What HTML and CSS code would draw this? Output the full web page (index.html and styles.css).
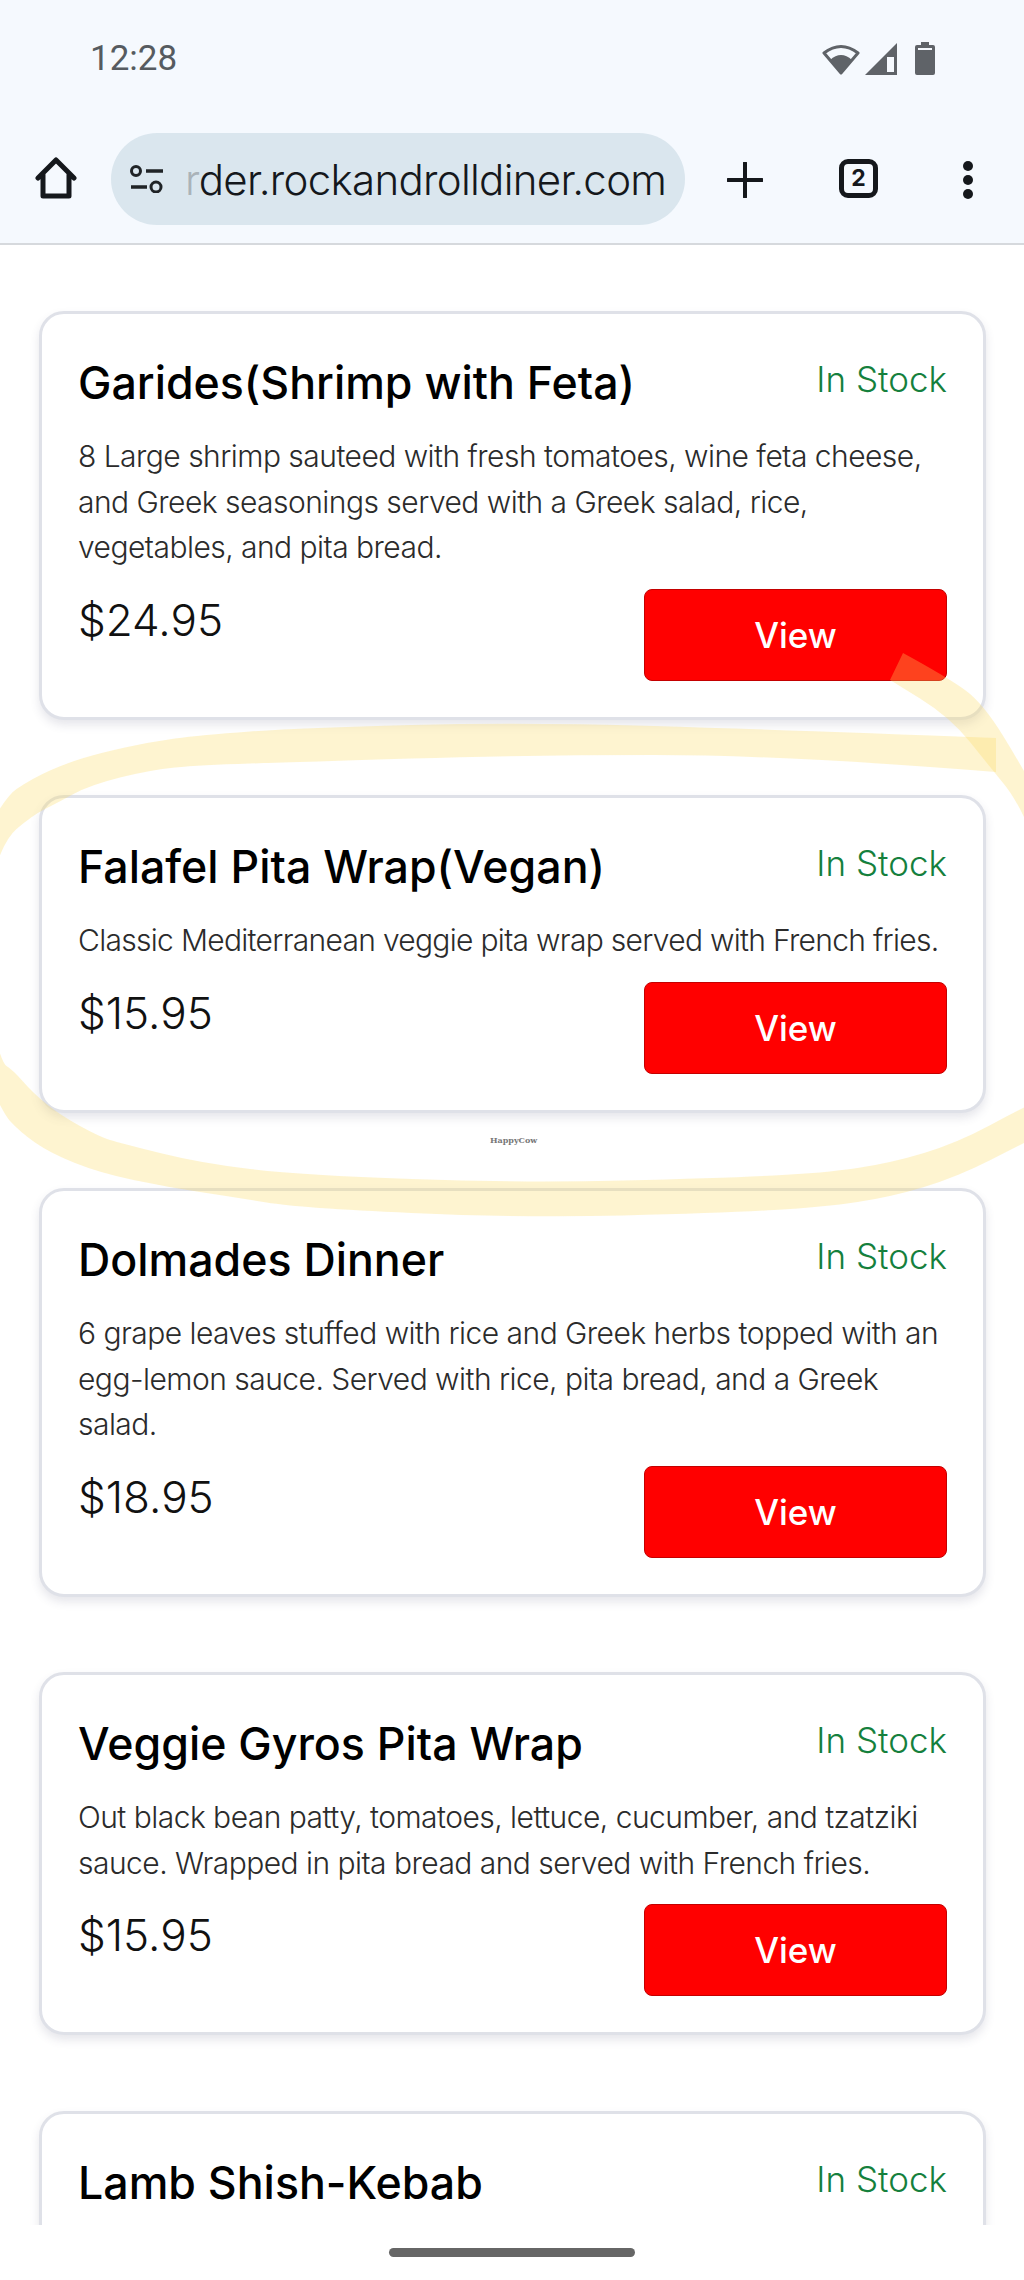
FILE: index.html
```html
<!DOCTYPE html>
<html lang="en">
<head>
  <meta charset="UTF-8">
  <meta name="viewport" content="width=device-width, initial-scale=1.0">
  <title>Rock and Roll Diner - Order</title>
  <link rel="stylesheet" href="styles.css">
</head>
<body>
  <div class="phone">
    <!-- Status bar -->
    <div class="status-bar">
      <span class="clock">12:28</span>
      <div class="status-icons">
        <svg class="wifi" width="38" height="32" viewBox="0 0 38 32">
          <path d="M19 30 2 10Q19 -3 36 10Z" fill="none" stroke="#5f6368" stroke-width="3" stroke-linejoin="round"/>
          <path d="M19 31 8 17Q19 7 30 17Z" fill="#5f6368"/>
        </svg>
        <svg class="signal" width="32" height="32" viewBox="0 0 32 32">
          <path d="M0 32 32 0V32Z" fill="#5f6368"/>
          <path d="M22 14 H29 V29 H22Z" fill="#f5f9fe"/>
        </svg>
        <svg class="battery" width="20" height="33" viewBox="0 0 20 33">
          <path d="M6 0H14V3H18Q20 3 20 5V31Q20 33 18 33H2Q0 33 0 31V5Q0 3 2 3H6Z" fill="#5f6368"/>
          <rect x="3" y="6" width="14" height="2" fill="#f5f9fe"/>
        </svg>
      </div>
    </div>

    <!-- Browser toolbar -->
    <div class="toolbar">
      <svg class="home-icon" width="42" height="43" viewBox="0 0 42 43">
        <path d="M3 21 21 3 39 21M8 17V39H34V17" fill="none" stroke="#15181c" stroke-width="5" stroke-linecap="round" stroke-linejoin="round"/>
      </svg>
      <div class="url-pill">
        <svg class="tune-icon" width="34" height="28" viewBox="0 0 34 28">
          <circle cx="6" cy="6" r="4.5" fill="none" stroke="#1f2326" stroke-width="3"/>
          <path d="M16 6H33M1 22H17" stroke="#1f2326" stroke-width="3.5"/>
          <circle cx="26" cy="22" r="5" fill="none" stroke="#1f2326" stroke-width="3"/>
        </svg>
        <div class="url"><span class="url-fade">r</span>der.rockandrolldiner.com</div>
      </div>
      <svg class="plus-icon" width="36" height="36" viewBox="0 0 36 36">
        <path d="M18 1V35M1 18H35" stroke="#15181c" stroke-width="4" stroke-linecap="round"/>
      </svg>
      <div class="tabs-count">2</div>
      <div class="menu-dots"><i></i><i></i><i></i></div>
    </div>

    <!-- Menu list -->
    <div class="menu-list">
      <div class="prev-card"></div>

      <div class="card">
        <div class="card-head">
          <h2>Garides(Shrimp with Feta)</h2>
          <span class="stock">In Stock</span>
        </div>
        <p class="desc">8 Large shrimp sauteed with fresh tomatoes, wine feta cheese, and Greek seasonings served with a Greek salad, rice, vegetables, and pita bread.</p>
        <div class="card-foot">
          <span class="price">$24.95</span>
          <button class="view-btn">View</button>
        </div>
      </div>

      <div class="card">
        <div class="card-head">
          <h2>Falafel Pita Wrap(Vegan)</h2>
          <span class="stock">In Stock</span>
        </div>
        <p class="desc desc-tight">Classic Mediterranean veggie pita wrap served with French fries.</p>
        <div class="card-foot">
          <span class="price">$15.95</span>
          <button class="view-btn">View</button>
        </div>
      </div>

      <div class="card">
        <div class="card-head">
          <h2>Dolmades Dinner</h2>
          <span class="stock">In Stock</span>
        </div>
        <p class="desc">6 grape leaves stuffed with rice and Greek herbs topped with an egg-lemon sauce. Served with rice, pita bread, and a Greek salad.</p>
        <div class="card-foot">
          <span class="price">$18.95</span>
          <button class="view-btn">View</button>
        </div>
      </div>

      <div class="card">
        <div class="card-head">
          <h2>Veggie Gyros Pita Wrap</h2>
          <span class="stock">In Stock</span>
        </div>
        <p class="desc">Out black bean patty, tomatoes, lettuce, cucumber, and tzatziki sauce. Wrapped in pita bread and served with French fries.</p>
        <div class="card-foot">
          <span class="price">$15.95</span>
          <button class="view-btn">View</button>
        </div>
      </div>

      <div class="card">
        <div class="card-head">
          <h2>Lamb Shish-Kebab</h2>
          <span class="stock">In Stock</span>
        </div>
      </div>
    </div>

    <!-- Gesture bar -->
    <div class="nav-bar"><div class="nav-pill"></div></div>

    <!-- Hand drawn highlight over the page -->
    <svg class="scribble" width="1024" height="2280" viewBox="0 0 1024 2280">
      <path d="M903 653Q947 677 965 690Q983 703 1003.5 736.5Q1024 770 1040 800L1030 830Q1017 800 1003.5 783.5Q990 767 970 742Q950 717 920 698.5Q890 680 890 680Z"/>
      <path d="M996 738Q784 730 653.5 726Q523 722 411.5 725Q300 728 250 731.5Q200 735 175 738.5Q150 742 125 747.5Q100 753 83.5 758Q67 763 50 770.5Q33 778 16.5 789Q0 800 -35 875Q-70 950 -35 1030Q0 1110 10 1121Q20 1132 35 1142.5Q50 1153 75 1163Q100 1173 133.5 1180Q167 1187 200 1192Q233 1197 266.5 1202.5Q300 1208 411.5 1213Q523 1218 623.5 1215.5Q724 1213 774 1210Q824 1207 857.5 1202Q891 1197 924 1187Q957 1177 990.5 1160Q1024 1143 1050 1130L1050 1095Q1024 1107 990.5 1125Q957 1143 924 1153Q891 1163 857.5 1168Q824 1173 774 1175.5Q724 1178 623.5 1180.5Q523 1183 411.5 1179Q300 1175 250 1169Q200 1163 160 1153Q120 1143 110 1140Q100 1137 80 1126Q60 1115 46.5 1104Q33 1093 23 1081.5Q13 1070 6.5 1066Q0 1062 -12.5 1006Q-25 950 -12.5 896.5Q0 843 16.5 829Q33 815 45 809Q57 803 73.5 794Q90 785 120 777.5Q150 770 175 767.5Q200 765 250 763.5Q300 762 411.5 758.5Q523 755 653.5 755Q784 755 996 772Z"/>
    </svg>
    <span class="watermark">HappyCow</span>
  </div>
</body>
</html>
```

FILE: styles.css
```css
body {
  margin: 0;
  background: #fff;
  font-family: "Inter", "Liberation Sans", sans-serif;
}

.phone {
  position: relative;
  width: 1024px;
  height: 2280px;
  display: flex;
  flex-direction: column;
  overflow: hidden;
  background: #fff;
}

/* Status bar */
.status-bar {
  height: 118px;
  flex-shrink: 0;
  box-sizing: border-box;
  padding: 42px 89px 0 90px;
  display: flex;
  justify-content: space-between;
  align-items: flex-start;
  background: #f5f9fe;
}

.clock {
  font-family: "Roboto", sans-serif;
  font-size: 35px;
  line-height: 33px;
  color: #565b60;
}

.status-icons {
  display: flex;
  align-items: flex-start;
  gap: 0;
}

.wifi { margin-right: 5px; margin-top: 1px; }
.signal { margin-right: 18px; margin-top: 1px; }

/* Toolbar */
.toolbar {
  height: 125px;
  flex-shrink: 0;
  display: flex;
  align-items: flex-start;
  background: #f5f9fe;
  border-bottom: 2px solid #d6d9dd;
}

.home-icon {
  margin: 39px 34px 0 35px;
}

.url-pill {
  width: 574px;
  height: 92px;
  margin-top: 15px;
  box-sizing: border-box;
  padding-left: 19px;
  display: flex;
  align-items: center;
  border-radius: 46px;
  background: #dae6ee;
}

.tune-icon {
  margin-right: 21px;
  flex-shrink: 0;
}

.url {
  font-size: 42px;
  letter-spacing: -0.7px;
  color: #15181c;
  white-space: nowrap;
  font-weight: 300;
}

.url-fade {
  color: #aab3b9;
}

.plus-icon {
  margin: 44px 76px 0 42px;
}

.tabs-count {
  width: 39px;
  height: 39px;
  margin-top: 41px;
  box-sizing: border-box;
  border: 5px solid #15181c;
  border-radius: 9px;
  font-size: 23px;
  font-weight: 700;
  line-height: 29px;
  text-align: center;
  color: #15181c;
}

.menu-dots {
  margin: 43px 0 0 85px;
  display: flex;
  flex-direction: column;
  gap: 4px;
}

.menu-dots i {
  width: 10px;
  height: 10px;
  border-radius: 50%;
  background: #15181c;
}

/* Menu list */
.menu-list {
  flex: 1;
  min-height: 0;
  overflow: hidden;
  padding: 0 38px 0 39px;
}

.prev-card {
  height: 0;
  margin: 0 24px 66px;
  box-shadow: 0 8px 10px rgba(60, 64, 80, 0.14);
}

.card {
  box-sizing: border-box;
  padding: 36px;
  margin-bottom: 75.5px;
  background: #fff;
  border: 3px solid #dfe1e8;
  border-radius: 25px;
  box-shadow: 0 5px 10px rgba(60, 64, 100, 0.13);
}

.card-head {
  display: flex;
  justify-content: space-between;
  align-items: flex-start;
}

.card h2 {
  margin: 0;
  font-size: 44.7px;
  line-height: 66px;
  font-weight: 500;
  color: #000;
}

.stock {
  font-size: 35px;
  line-height: 58px;
  font-weight: 300;
  color: #15803d;
}

.desc {
  margin: 18px 0 18px;
  font-size: 30px;
  letter-spacing: -0.53px;
  line-height: 45.5px;
  font-weight: 300;
  color: #2b2b2b;
}

.desc-tight {
  letter-spacing: -0.7px;
  white-space: nowrap;
}

.card-foot {
  display: flex;
  justify-content: space-between;
  align-items: flex-start;
}

.price {
  font-size: 44px;
  line-height: 62px;
  font-weight: 300;
  color: #111;
}

.view-btn {
  width: 303px;
  height: 92px;
  padding: 0;
  font-family: inherit;
  font-size: 35px;
  font-weight: 500;
  color: #fff;
  background: #ff0000;
  border: 1px solid #c40000;
  border-radius: 8px;
}

/* Gesture bar */
.nav-bar {
  height: 55px;
  flex-shrink: 0;
  display: flex;
  justify-content: center;
  background: #fff;
}

.nav-pill {
  width: 246px;
  height: 9px;
  margin-top: 23px;
  border-radius: 5px;
  background: #666;
}

/* Overlays */
.scribble {
  position: absolute;
  top: 0;
  left: 0;
  pointer-events: none;
}

.scribble path {
  fill: rgba(252, 220, 100, 0.3);
}

.watermark {
  position: absolute;
  top: 1134px;
  left: 490px;
  font-family: "DejaVu Serif", serif;
  font-size: 8px;
  line-height: 12px;
  font-weight: 700;
  color: #777;
}
```
